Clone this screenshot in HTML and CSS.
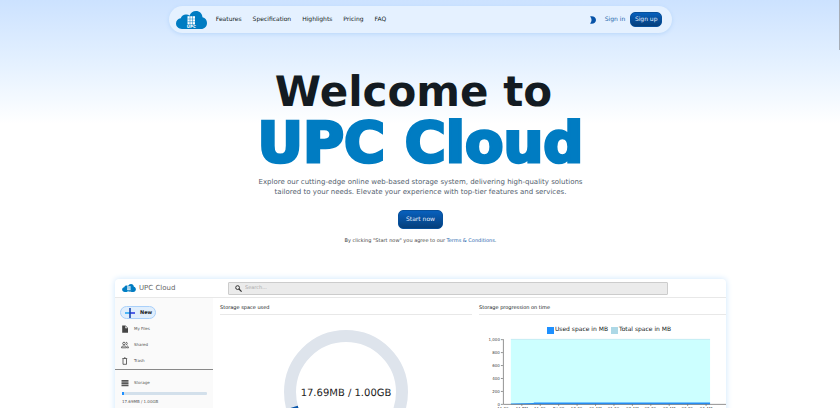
FILE: index.html
```html
<!DOCTYPE html>
<html lang="en">
<head>
<meta charset="utf-8">
<title>UPC Cloud</title>
<link rel="stylesheet" href="styles.css">
</head>
<body>
<header class="nav">
  <a href="#" class="brand" aria-label="UPC Cloud"><svg class="logo" viewBox="0 0 31 18">
    <g id="logo">
      <path fill="#007cc2" d="M6 18C2.600 18 0 15.700 0 12.600 0 9.700 2 7.700 4.700 7.300 5.500 4.700 8 3.300 10.500 3.600 11.800 3.700 12.700 4.100 13.500 4.700 14.500 1.800 17 0 20 0 23.600 0 26.300 2.500 26.500 6.300 29.300 7 31 9.200 31 12 31 15.500 28.500 18 25 18Z"/>
      <path fill="#fff" d="M11.500 5.200h7.500v8.300h-7.500z"/>
      <path stroke="#007cc2" stroke-width=".5" d="M14 5v9M16.500 5v9M11.500 8h8M11.500 10.700h8"/>
      <text x="15.300" y="17" text-anchor="middle" class="logo-text">UPC</text>
    </g>
  </svg></a>
  <nav class="links">
    <a href="#features">Features</a><a href="#specification">Specification</a><a href="#highlights">Highlights</a><a href="#pricing">Pricing</a><a href="#faq">FAQ</a>
  </nav>
  <button class="theme" aria-label="Toggle theme"><svg viewBox="0 0 6 8"><path fill="#0753a8" d="M0 .5C2.800-.5 6 1 6 4S2.800 8.500 0 7.500C2 5.500 2 2.500 0 .5Z"/></svg></button>
  <a href="#signin" class="signin">Sign in</a>
  <button class="primary signup">Sign up</button>
</header>
<main>
  <section class="hero">
    <h1><span class="welcome">Welcome to</span><span class="name">UPC Cloud</span></h1>
    <p class="lead">Explore our cutting-edge online web-based storage system, delivering high-quality solutions<br>tailored to your needs. Elevate your experience with top-tier features and services.</p>
    <button class="primary start">Start now</button>
    <p class="terms">By clicking "Start now" you agree to our <a href="#terms">Terms &amp; Conditions</a>.</p>
  </section>
  <section class="preview">
    <div class="app-bar">
      <div class="app-brand"><svg class="app-logo" viewBox="0 0 31 18"><use href="#logo"/></svg><span>UPC Cloud</span></div>
      <label class="search"><svg viewBox="0 0 7 7" fill="none" stroke="#333"><circle cx="2.600" cy="2.600" r="1.900"/><path d="M4 4l2.600 2.600" stroke-width="1.200"/></svg><input type="text" placeholder="Search..." aria-label="Search"></label>
    </div>
    <div class="app-body">
      <aside class="side">
        <button class="new"><svg viewBox="0 0 10 10"><path fill="#1ca4f4" d="M0 4.200h5v1.600H0z"/><path fill="#2330e0" d="M5 4.200h5v1.600H5z"/><path fill="#1646ae" d="M4.200 0h1.600v10H4.200z"/></svg>New</button>
        <a href="#files"><svg viewBox="0 0 8 8"><path fill="#444" d="M1.200.5h3.300L7 3v4.700H1.200z"/><path fill="#fafafa" d="M4.300 1v2.200h2.200z"/></svg>My Files</a>
        <a href="#shared"><svg viewBox="0 0 8 8" fill="none" stroke="#444" stroke-width=".8"><circle cx="3" cy="2.500" r="1.300"/><path d="M.5 6.800V6C.5 4.600 5.500 4.600 5.500 6v.8zM5 1.200c1.700 0 1.700 2.600 0 2.600M6 4.900c1 .3 1.500.8 1.500 1.900H6"/></svg>Shared</a>
        <a href="#trash"><svg viewBox="0 0 8 8" fill="none" stroke="#444" stroke-width=".8"><path d="M1.300 1.500h4.900M3 .8h1.500M2 2v5.300h3.500V2"/></svg>Trash</a>
        <div class="storage">
          <a href="#storage"><svg viewBox="0 0 8 8" fill="#555"><path d="M.5 1h7v1.700h-7zM.5 3.300h7V5h-7zM.5 5.600h7v1.700h-7z"/></svg>Storage</a>
          <div class="meter"><div></div></div>
          <small>17.69MB / 1.00GB</small>
        </div>
      </aside>
      <section class="panel">
        <h2>Storage space used</h2>
        <svg class="donut" viewBox="0 0 124 124" role="img" aria-label="Storage space used">
          <circle cx="62" cy="62" r="56" fill="none" stroke="#dee4ec" stroke-width="12"/>
          <path d="M8 77.500A56 56 0 0 0 10.500 84" fill="none" stroke="#0753a8" stroke-width="12"/>
          <text x="62" y="66" text-anchor="middle">17.69MB / 1.00GB</text>
        </svg>
      </section>
      <section class="panel">
        <h2>Storage progression on time</h2>
        <div class="legend"><span class="used">Used space in MB</span><span class="total">Total space in MB</span></div>
        <svg class="chart" viewBox="0 0 248 82" role="img" aria-label="Storage progression on time">
          <path fill="#cff" d="M32 3h200v65H32z"/>
          <path stroke="#add8e6" stroke-width=".5" d="M32 3.200h200"/>
          <path fill="#1e90ff" d="M32 67.500l23-.5v-.5h177v2H32z"/>
          <path fill="none" stroke="#777" stroke-width=".8" d="M24.500 3v65.500H248M22 3.500h2M22 16.500h2M22 29.500h2M22 42.500h2M22 55.500h2M22 68.500h2M43 68v2M61.500 68v2M80 68v2M98.500 68v2M117 68v2M135.500 68v2M154 68v2M172.500 68v2M191 68v2M209.500 68v2M228 68v2"/>
          <g text-anchor="end"><text x="21" y="5">1,000</text><text x="21" y="18">800</text><text x="21" y="31">600</text><text x="21" y="44">400</text><text x="21" y="57">200</text><text x="21" y="70">0</text></g>
          <g text-anchor="middle"><text x="24" y="74">11:30</text><text x="43" y="74">11 PM</text><text x="61" y="74">11:30</text><text x="80" y="74">Fri 08</text><text x="98" y="74">12:30</text><text x="117" y="74">01 AM</text><text x="135" y="74">01:30</text><text x="154" y="74">02 AM</text><text x="172" y="74">02:30</text><text x="191" y="74">03 AM</text><text x="209" y="74">03:30</text><text x="228" y="74">04 AM</text></g>
        </svg>
      </section>
    </div>
  </section>
</main>
<div class="scroll-thumb"></div>
</body>
</html>
```
FILE: styles.css
```css
* { box-sizing: border-box; }
html { height: 100%; overflow: hidden; }
body {
  height: 100%;
  margin: 0;
  padding-left: 1px;
  overflow: hidden;
  background: #fff linear-gradient(#cce2ff 0, #e3f0ff 60px, #fff 124px) no-repeat;
  color: #131b22;
  font: 6px/12px "DejaVu Sans", sans-serif;
  text-rendering: geometricPrecision;
}
a { color: inherit; text-decoration: none; }
button { font: inherit; text-rendering: inherit; border: 0; padding: 0; cursor: pointer; }
h1, h2, p { margin: 0; }
.logo-text { font: bold 4px "DejaVu Sans", sans-serif; fill: #fff; }

.nav {
  display: flex;
  align-items: center;
  width: 60%;
  height: 27px;
  margin: 6px auto 0;
  padding: 0 10px 0 7px;
  border-radius: 14px;
  background: #e5f1ff;
  box-shadow: 0 1px 4px #b8d7fa;
}
.brand { display: flex; }
.logo { width: 31px; height: 18px; }
.links { display: flex; gap: 11px; margin: 0 auto 0 9px; }
.theme { display: flex; background: none; margin-right: 9px; }
.theme svg { width: 6px; height: 8px; }
.signin { color: #2465ac; margin-right: 5px; }
.primary {
  color: #e3efff;
  background: linear-gradient(#0860bd, #053f7b);
  border: 1px solid #07509b;
  border-radius: 5px;
}
.signup { width: 32px; height: 15px; }

.hero { display: flex; flex-direction: column; align-items: center; text-align: center; }
h1 { display: flex; flex-direction: column; align-items: center; margin-top: 34px; font-weight: bold; }
.welcome { font-size: 42px; line-height: 50px; margin-right: 14px; }
.name { font-size: 56px; line-height: 54px; color: #007cc2; -webkit-text-stroke: 3px #007cc2; }
.lead { margin-top: 6px; font-size: 7px; line-height: 10px; color: #53606e; }
.start { width: 45px; height: 19px; margin-top: 13px; }
.terms { margin-top: 6px; font-size: 5px; color: #444; }
.terms a { color: #2465ac; }

.preview {
  width: calc(100% - 228px);
  margin: 32px auto 0;
  background: #fff;
  border-radius: 4px 4px 0 0;
  box-shadow: 0 0 6px #cbe5fc;
  overflow: hidden;
}
.app-bar { display: flex; align-items: center; height: 19px; border-bottom: 1px solid #e8e8e8; }
.app-brand { display: flex; align-items: center; gap: 3px; width: 113px; padding-left: 7px; font-size: 7px; color: #666; }
.app-logo { width: 14px; height: 8px; }
.search {
  display: flex;
  align-items: center;
  gap: 3px;
  width: 440px;
  height: 13px;
  padding: 0 6px;
  border: 1px solid #ccc;
  border-radius: 1px;
  background: #ebebeb;
}
.search svg { width: 7px; height: 7px; }
.search input { flex: 1; min-width: 0; height: 11px; padding: 0; border: 0; outline: 0; background: none; font: inherit; font-size: 5px; text-rendering: inherit; }
.search input::placeholder { color: #aaa; }
.app-body { display: grid; grid-template-columns: 98px 252px 1fr; column-gap: 7px; height: 170px; }
.side { display: flex; flex-direction: column; background: #fafafa; color: #555; font-size: 4px; }
.side a { display: flex; align-items: center; gap: 5px; height: 16px; padding-left: 6px; }
.side a svg { width: 8px; height: 8px; }
.new {
  display: flex;
  align-items: center;
  gap: 5px;
  width: 36px;
  height: 13px;
  margin: 8px 0 2px 5px;
  padding-left: 4px;
  border: 1px solid #a9d0fa;
  border-radius: 7px;
  background: #e0eefc;
  color: #222;
  font-size: 5px;
  font-weight: bold;
}
.new svg { width: 10px; height: 10px; }
.storage { padding-top: 5px; border-top: 1px solid #888; }
.meter { height: 3px; margin: 1px 6px 1px 7px; border-radius: 1px; background: #d3e0eb; }
.meter div { width: 2%; height: 3px; background: #1e90ff; }
.storage small { display: block; padding-left: 7px; font-size: 4px; }
.panel { display: flex; flex-direction: column; }
h2 { padding: 4px 0 0; border-bottom: 1px solid #e8e8e8; font-size: 5px; font-weight: normal; }
.donut { width: 124px; height: 124px; margin: 15px auto 0; }
.donut text { font-size: 10px; fill: #222; }
.legend { display: flex; justify-content: center; gap: 3px; margin: 9px 0 0 13px; font-size: 6px; }
.legend span { display: flex; align-items: center; gap: 1px; }
.legend span::before { content: ""; width: 7px; height: 7px; background: #1e90ff; }
.legend .total::before { background: #add8e6; }
.chart { width: 100%; height: 82px; }
.chart text { font-size: 4px; fill: #444; }
.scroll-thumb { position: fixed; top: 0; right: 0; width: 1px; height: 50px; background: #a6adb6; }
```
